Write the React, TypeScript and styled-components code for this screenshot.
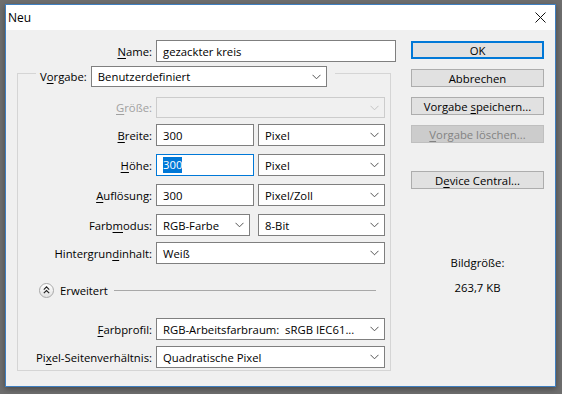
import React from 'react';
import styled, { createGlobalStyle } from 'styled-components';

const GlobalStyle = createGlobalStyle`
  html, body {
    margin: 0;
    padding: 0;
    background: #6e6e6e;
  }
  body {
    font-family: "Open Sans", "Noto Sans", sans-serif;
    font-size: 11.3px;
    color: #000;
  }
`;

const Screen = styled.div`
  width: 562px;
  height: 394px;
  box-sizing: border-box;
  padding: 4px 0 0 5px;
  background: #6e6e6e;
`;

const Window = styled.div`
  width: 551px;
  height: 383px;
  box-sizing: border-box;
  border: 1px solid #3f7fc0;
  background: #f0f0f0;
  display: flex;
  flex-direction: column;
  box-shadow: 0 2px 6px rgba(0, 0, 0, 0.35);
`;

const TitleBar = styled.div`
  height: 25px;
  flex: none;
  background: #fff;
  display: flex;
  align-items: center;
  justify-content: space-between;
  padding: 0 9px 0 2px;
  font-size: 12px;
`;

const Body = styled.div`
  flex: 1;
  display: flex;
  padding-top: 10px;
`;

const LeftCol = styled.div`
  width: 390px;
  display: flex;
  flex-direction: column;
`;

const NameRow = styled.div`
  display: grid;
  grid-template-columns: 146px 240px;
  column-gap: 4px;
  align-items: center;
  height: 22px;
`;

const Label = styled.div<{ $disabled?: boolean }>`
  text-align: right;
  white-space: nowrap;
  color: ${(p) => (p.$disabled ? '#a0a0a0' : '#000')};
`;

const Key = styled.span`
  text-decoration: underline;
  text-underline-offset: 2px;
`;

const Group = styled.div`
  margin: 11px 0 0 11px;
  width: 374px;
  height: 298px;
  box-sizing: border-box;
  border: 1px solid #d5d5d5;
  display: flex;
  flex-direction: column;
`;

const Legend = styled.div`
  margin: -8px 0 0 18px;
  align-self: flex-start;
  display: flex;
  align-items: center;
  gap: 4px;
  padding: 0 8px 0 4px;
  background: #f0f0f0;
`;

const Row = styled.div<{ $mt: number }>`
  margin-top: ${(p) => p.$mt}px;
  display: grid;
  grid-template-columns: 134px 229px;
  column-gap: 4px;
  align-items: center;
`;

const Controls = styled.div`
  display: flex;
  justify-content: space-between;
`;

const Field = styled.div<{ $w: number; $h?: number; $focus?: boolean }>`
  width: ${(p) => p.$w}px;
  height: ${(p) => p.$h ?? 22}px;
  box-sizing: border-box;
  border: 1px solid ${(p) => (p.$focus ? '#0078d7' : '#7f7f7f')};
  background: #fff;
  display: flex;
  align-items: center;
  padding-left: 6px;
  white-space: pre;
`;

const Selected = styled.span`
  background: #0078d7;
  color: #fff;
  line-height: 16px;
`;

const Combo = styled.div<{ $w: number; $h?: number; $disabled?: boolean }>`
  width: ${(p) => p.$w}px;
  height: ${(p) => p.$h ?? 22}px;
  box-sizing: border-box;
  border: 1px solid ${(p) => (p.$disabled ? '#cccccc' : '#7f7f7f')};
  background: ${(p) => (p.$disabled ? '#f0f0f0' : '#fff')};
  display: flex;
  align-items: center;
  justify-content: space-between;
  padding: 0 5px 0 6px;
  white-space: pre;
  overflow: hidden;
`;

const ChevronSvg = styled.svg<{ $disabled?: boolean }>`
  flex: none;
  stroke: ${(p) => (p.$disabled ? '#c4c4c4' : '#555')};
`;

const Chevron = ({ disabled }: { disabled?: boolean }) => (
  <ChevronSvg $disabled={disabled} width="9" height="6" viewBox="0 0 9 6" fill="none">
    <path d="M0.5 0.8 L4.5 4.8 L8.5 0.8" strokeWidth="1" />
  </ChevronSvg>
);

const AdvancedRow = styled.div`
  margin-top: 18px;
  height: 16px;
  display: flex;
  align-items: center;
  padding: 0 14px 0 21px;
  gap: 6px;
`;

const RoundBtn = styled.div`
  width: 15px;
  height: 15px;
  box-sizing: border-box;
  border-radius: 50%;
  border: 1px solid #a8a8a8;
  background: linear-gradient(#ffffff, #e2e2e2);
  display: flex;
  align-items: center;
  justify-content: center;
`;

const Rule = styled.div`
  flex: 1;
  height: 1px;
  background: #a8a8a8;
`;

const RightCol = styled.div`
  margin-left: 15px;
  width: 133px;
  display: flex;
  flex-direction: column;
`;

const Button = styled.div<{ $mt: number; $default?: boolean; $disabled?: boolean }>`
  margin-top: ${(p) => p.$mt}px;
  height: 18px;
  box-sizing: border-box;
  border: ${(p) => (p.$default ? '2px solid #0078d7' : p.$disabled ? '1px solid #bfbfbf' : '1px solid #adadad')};
  background: ${(p) => (p.$disabled ? '#cccccc' : '#e1e1e1')};
  color: ${(p) => (p.$disabled ? '#838383' : '#000')};
  display: flex;
  align-items: center;
  justify-content: center;
  white-space: nowrap;
`;

const Info = styled.div`
  margin-top: 66px;
  display: flex;
  flex-direction: column;
  align-items: center;
  gap: 9px;
  line-height: 16px;
`;

export default function App() {
  return (
    <>
      <GlobalStyle />
      <Screen>
        <Window>
          <TitleBar>
            <span>Neu</span>
            <svg width="11" height="11" viewBox="0 0 11 11" stroke="#111" strokeWidth="1">
              <path d="M0.5 0.5 L10.5 10.5 M10.5 0.5 L0.5 10.5" />
            </svg>
          </TitleBar>
          <Body>
            <LeftCol>
              <NameRow>
                <Label>
                  <Key>N</Key>ame:
                </Label>
                <Field $w={240}>gezackter kreis</Field>
              </NameRow>
              <Group>
                <Legend>
                  <Label>
                    V<Key>o</Key>rgabe:
                  </Label>
                  <Combo $w={236} $h={21}>
                    <span>Benutzerdefiniert</span>
                    <Chevron />
                  </Combo>
                </Legend>
                <Row $mt={10}>
                  <Label $disabled>
                    <Key>G</Key>röße:
                  </Label>
                  <Combo $w={229} $h={21} $disabled>
                    <span />
                    <Chevron disabled />
                  </Combo>
                </Row>
                <Row $mt={6}>
                  <Label>
                    <Key>B</Key>reite:
                  </Label>
                  <Controls>
                    <Field $w={98}>300</Field>
                    <Combo $w={127}>
                      <span>Pixel</span>
                      <Chevron />
                    </Combo>
                  </Controls>
                </Row>
                <Row $mt={8}>
                  <Label>
                    <Key>H</Key>öhe:
                  </Label>
                  <Controls>
                    <Field $w={98} $focus>
                      <Selected>300</Selected>
                    </Field>
                    <Combo $w={127}>
                      <span>Pixel</span>
                      <Chevron />
                    </Combo>
                  </Controls>
                </Row>
                <Row $mt={8}>
                  <Label>
                    <Key>A</Key>uflösung:
                  </Label>
                  <Controls>
                    <Field $w={98}>300</Field>
                    <Combo $w={127}>
                      <span>Pixel/Zoll</span>
                      <Chevron />
                    </Combo>
                  </Controls>
                </Row>
                <Row $mt={8}>
                  <Label>
                    Farb<Key>m</Key>odus:
                  </Label>
                  <Controls>
                    <Combo $w={94}>
                      <span>RGB-Farbe</span>
                      <Chevron />
                    </Combo>
                    <Combo $w={127}>
                      <span>8-Bit</span>
                      <Chevron />
                    </Combo>
                  </Controls>
                </Row>
                <Row $mt={6}>
                  <Label>
                    Hintergrun<Key>d</Key>inhalt:
                  </Label>
                  <Combo $w={229}>
                    <span>Weiß</span>
                    <Chevron />
                  </Combo>
                </Row>
                <AdvancedRow>
                  <RoundBtn>
                    <svg width="7" height="8" viewBox="0 0 7 8" fill="none" stroke="#222" strokeWidth="1.1">
                      <path d="M0.8 3.6 L3.5 0.9 L6.2 3.6 M0.8 7.2 L3.5 4.5 L6.2 7.2" />
                    </svg>
                  </RoundBtn>
                  <span>Erweitert</span>
                  <Rule />
                </AdvancedRow>
                <Row $mt={20}>
                  <Label>
                    <Key>F</Key>arbprofil:
                  </Label>
                  <Combo $w={229}>
                    <span>RGB-Arbeitsfarbraum:  sRGB IEC61...</span>
                    <Chevron />
                  </Combo>
                </Row>
                <Row $mt={6}>
                  <Label>
                    Pi<Key>x</Key>el-Seitenverhältnis:
                  </Label>
                  <Combo $w={229}>
                    <span>Quadratische Pixel</span>
                    <Chevron />
                  </Combo>
                </Row>
              </Group>
            </LeftCol>
            <RightCol>
              <Button $mt={1} $default>
                OK
              </Button>
              <Button $mt={10}>Abbrechen</Button>
              <Button $mt={10}>
                Vorgabe&nbsp;<Key>s</Key>peichern...
              </Button>
              <Button $mt={10} $disabled>
                <Key>V</Key>orgabe löschen...
              </Button>
              <Button $mt={28}>
                D<Key>e</Key>vice Central...
              </Button>
              <Info>
                <span>Bildgröße:</span>
                <span>263,7 KB</span>
              </Info>
            </RightCol>
          </Body>
        </Window>
      </Screen>
    </>
  );
}
